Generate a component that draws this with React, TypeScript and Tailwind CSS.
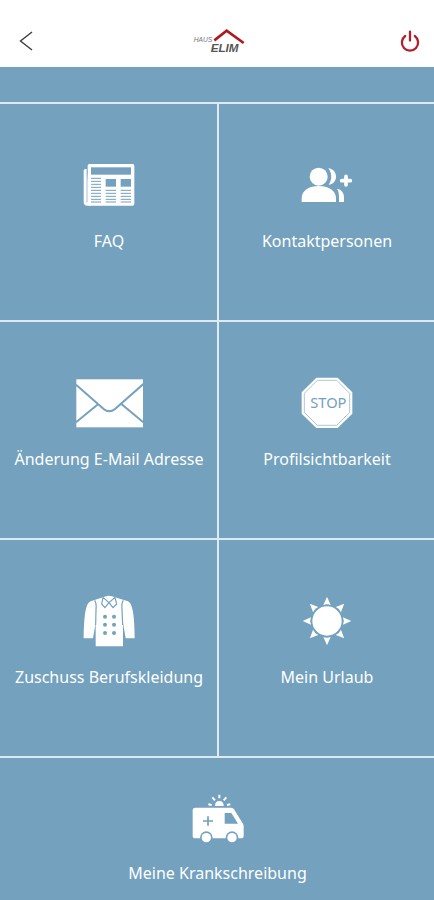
import type { ReactNode } from "react";

const FONT = "font-['Noto_Sans','Open_Sans',sans-serif]";

function BackIcon() {
  return (
    <svg width="14" height="20" viewBox="0 0 14 20" fill="none" stroke="#3c3c3c" strokeWidth="1.4" aria-hidden="true">
      <path d="M13 1 1.5 10 13 19" />
    </svg>
  );
}

function PowerIcon() {
  return (
    <svg width="20" height="22" viewBox="0 0 20 22" fill="none" stroke="#b3202b" strokeWidth="2.3" strokeLinecap="round" aria-hidden="true">
      <path d="M10 1.6v9M5.2 6a8.1 8.1 0 1 0 9.6 0" />
    </svg>
  );
}

function Logo() {
  return (
    <svg width="54" height="28" viewBox="36 26 162 84" role="img" aria-label="Haus Elim">
      <path d="M103 66 140 37 191 74" fill="none" stroke="#b01820" strokeWidth="8" />
      <text x="41" y="71" fontSize="20" fontStyle="italic" fill="#777" fontFamily="Liberation Sans, sans-serif">HAUS</text>
      <text x="92" y="102" fontSize="35" fontWeight="700" fontStyle="italic" fill="#555" fontFamily="Liberation Sans, sans-serif">ELIM</text>
    </svg>
  );
}

function NewspaperIcon() {
  const full = [86, 95, 104, 113, 122, 131, 140, 149, 157];
  const short = [122, 131, 140, 149, 157];
  return (
    <svg width="52" height="44" viewBox="38 40 156 132" aria-hidden="true">
      <path d="M49 58h-4q-5 0-5 5v94q0 11 11 11h10" fill="#fff" />
      <rect x="52" y="43" width="140" height="125" rx="5" fill="#fff" />
      <path d="M50 62v96" stroke="#73a1be" strokeWidth="2" />
      <g fill="#73a1be">
        <rect x="62" y="53" width="120" height="22" />
        <rect x="106" y="88" width="31" height="23" />
        <rect x="151" y="88" width="31" height="23" />
      </g>
      <g stroke="#73a1be" strokeWidth="3">
        {full.map((y) => <path key={y} d={`M62 ${y}h30`} />)}
        {short.map((y) => <path key={y} d={`M106 ${y}h31M151 ${y}h31`} />)}
      </g>
    </svg>
  );
}

function ContactsIcon() {
  return (
    <svg width="52" height="36" viewBox="153 53 156 108" fill="#fff" aria-hidden="true">
      <circle cx="206" cy="82" r="27" />
      <path d="M155 158v-11c0-24 22-37 51-37s52 13 52 37v11z" />
      <path d="M235 57c15 2 23 12 23 25s-9 23-22 24c10-14 11-34-1-49z" />
      <path d="M261 118c14 3 21 12 21 26v14h-15v-14c0-10-1-18-6-26z" />
      <path d="M288 81v26M275 94h26" stroke="#fff" strokeWidth="11" strokeLinecap="round" />
    </svg>
  );
}

function MailIcon() {
  return (
    <svg width="67" height="49" viewBox="227 27 201 147" aria-hidden="true">
      <rect x="228" y="28" width="200" height="144" fill="#fff" />
      <path d="M227 44 310 117q17 14 34 0L429 42M227 157l67-55M429 157l-66-55" fill="none" stroke="#73a1be" strokeWidth="6" />
    </svg>
  );
}

function StopIcon() {
  return (
    <svg width="52" height="52" viewBox="152 21 156 156" aria-hidden="true">
      <path d="M198 23h64l44 44v64l-44 43h-64l-44-43V67z" fill="#fff" />
      <path d="M201 31h58l39 39v57l-39 39h-58l-39-39V70z" fill="none" stroke="#9bbbd1" strokeWidth="2.5" />
      <text x="234" y="114" textAnchor="middle" fontSize="44" fill="#73a1be" fontFamily="Noto Sans, sans-serif">STOP</text>
    </svg>
  );
}

function CoatIcon() {
  return (
    <svg width="52" height="52" viewBox="248 31 156 156" aria-hidden="true">
      <path d="M308 38q18-9 36 0l39 12c8 4 10 12 13 23 5 18 7 60 7 88h-27l-8-47v71h-82v-71l-8 47h-28c0-30 2-70 7-88 3-12 6-19 14-23z" fill="#fff" />
      <g fill="none" stroke="#73a1be" strokeWidth="3.5">
        <path d="M283 47q6 8 4 28l-1 46M369 47q-6 8-4 28l2 46" />
        <path d="M308 38 304 58 314 69 326 54 338 69 349 58 344 38M308 38l18 16 18-16" />
      </g>
      <g fill="#73a1be">
        {[96, 120, 145].map((y) => (
          <g key={y}>
            <circle cx="314" cy={y} r="6" />
            <circle cx="341" cy={y} r="6" />
          </g>
        ))}
      </g>
    </svg>
  );
}

function SunIcon() {
  return (
    <svg width="50" height="50" viewBox="157 34 150 150" fill="#fff" aria-hidden="true">
      <circle cx="232" cy="109" r="44" />
      {[0, 45, 90, 135, 180, 225, 270, 315].map((a) => (
        <path key={a} d="M232 36 243 61Q232 56 221 61z" transform={`rotate(${a} 232 109)`} />
      ))}
    </svg>
  );
}

function AmbulanceIcon() {
  return (
    <svg width="52" height="50" viewBox="215 160 156 150" aria-hidden="true">
      <path d="M225 201h108q5 0 8 5l25 40q4 5 4 10v29q0 8-8 8H225q-8 0-8-8v-76q0-8 8-8z" fill="#fff" />
      <path d="M313 217h20l20 32h-40z" fill="#73a1be" />
      <path d="M263 227v28M248 241h30" stroke="#73a1be" strokeWidth="5" />
      <circle cx="258" cy="291" r="19" fill="#73a1be" />
      <circle cx="335" cy="291" r="19" fill="#73a1be" />
      <circle cx="258" cy="291" r="14" fill="#fff" />
      <circle cx="335" cy="291" r="14" fill="#fff" />
      <path d="M284 196q0-15 13-15t13 15z" fill="#fff" />
      <path d="M297 162v11M276 170l8 9M318 170l-8 9M264 191l10 2M330 191l-10 2" stroke="#fff" strokeWidth="6" />
    </svg>
  );
}

function Tile({ label, icon, wide = false }: { label: string; icon: ReactNode; wide?: boolean }) {
  return (
    <button
      type="button"
      className={`flex flex-col items-center bg-[#73a1be] pl-px text-white ${wide ? "col-span-2 pt-9 pb-4" : "h-[216px] pt-14"}`}
    >
      <span className="flex h-[50px] items-center justify-center">{icon}</span>
      <span className={`text-base leading-6 whitespace-nowrap ${wide ? "mt-[17px]" : "mt-[19px]"}`}>{label}</span>
    </button>
  );
}

export default function App() {
  return (
    <div className={`flex min-h-screen flex-col bg-[#73a1be] ${FONT}`}>
      <header className="flex h-[67px] items-end justify-between bg-white px-3 pb-3">
        <button type="button" aria-label="Zurück" className="flex h-7 w-7 items-center justify-center">
          <BackIcon />
        </button>
        <Logo />
        <button type="button" aria-label="Abmelden" className="flex h-7 w-6 items-center justify-center">
          <PowerIcon />
        </button>
      </header>
      <main className="mt-[35px] grid grid-cols-[217fr_215fr] gap-0.5 bg-[#dfe9f2] pt-0.5">
        <Tile label="FAQ" icon={<NewspaperIcon />} />
        <Tile label="Kontaktpersonen" icon={<ContactsIcon />} />
        <Tile label="Änderung E-Mail Adresse" icon={<MailIcon />} />
        <Tile label="Profilsichtbarkeit" icon={<StopIcon />} />
        <Tile label="Zuschuss Berufskleidung" icon={<CoatIcon />} />
        <Tile label="Mein Urlaub" icon={<SunIcon />} />
        <Tile label="Meine Krankschreibung" icon={<AmbulanceIcon />} wide />
      </main>
    </div>
  );
}
